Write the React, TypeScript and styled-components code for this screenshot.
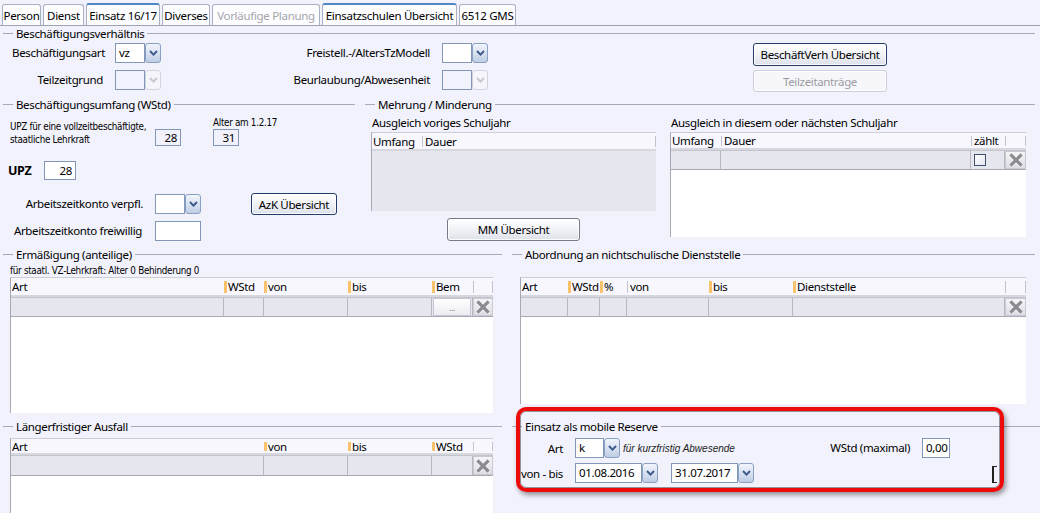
import React from "react";
import styled, { createGlobalStyle } from "styled-components";

const BG = "#f2f2fc";
const LINE = "#a6a9b9";
const FIELD_BORDER = "#8397b9";

const GlobalStyle = createGlobalStyle`
  * { box-sizing: border-box; }
  html, body { margin: 0; padding: 0; background: ${BG}; }
  body {
    font-family: "Noto Sans", "Open Sans", Arial, sans-serif;
    font-size: 11.5px;
    letter-spacing: -0.35px;
    color: #000;
  }
`;

const Page = styled.div`
  width: 1040px;
  height: 513px;
  overflow: hidden;
  display: flex;
  flex-direction: column;
  background: ${BG};
`;

/* ---------- tabs ---------- */
const TabBar = styled.div`
  flex: none;
  height: 26px;
  display: flex;
  align-items: flex-end;
  gap: 2px;
  padding-left: 2px;
  border-bottom: 1px solid #9da3b5;
`;

const Tab = styled.div<{ $w: number; $active?: boolean; $disabled?: boolean }>`
  width: ${(p) => p.$w}px;
  height: ${(p) => (p.$active ? 22 : 21)}px;
  flex: none;
  display: flex;
  align-items: center;
  justify-content: center;
  background: #fdfdff;
  border: 1px solid #a9b0c2;
  border-top: ${(p) => (p.$active ? "2px solid #4f86c6" : "1px solid #a9b0c2")};
  border-bottom: none;
  border-radius: 3px 3px 0 0;
  color: ${(p) => (p.$disabled ? "#a5a5ab" : "#000")};
  font-size: 11.5px;
  letter-spacing: -0.3px;
  white-space: nowrap;
`;

/* ---------- groups ---------- */
const Band = styled.div<{ $h?: number; $pt?: number }>`
  flex: ${(p) => (p.$h ? "none" : "1")};
  height: ${(p) => (p.$h ? `${p.$h}px` : "auto")};
  padding-top: ${(p) => p.$pt ?? 0}px;
  display: flex;
  align-items: flex-start;
`;

const Group = styled.div<{ $w: number; $ml?: number }>`
  position: relative;
  width: ${(p) => p.$w}px;
  margin-left: ${(p) => p.$ml ?? 0}px;
  flex: none;
  display: flex;
  flex-direction: column;
`;

const GroupHead = styled.div`
  flex: none;
  height: 14px;
  display: flex;
  align-items: center;
  gap: 3px;
  padding-left: 3px;
  white-space: nowrap;
  &::before {
    content: "";
    width: 10px;
    height: 1px;
    background: ${LINE};
  }
  &::after {
    content: "";
    flex: 1;
    height: 1px;
    background: ${LINE};
  }
`;

/* ---------- form bits ---------- */
const FieldLabel = styled.div<{ $pr?: number; $w?: number }>`
  justify-self: end;
  align-self: start;
  width: ${(p) => (p.$w ? `${p.$w}px` : "auto")};
  flex: none;
  text-align: right;
  padding-right: ${(p) => p.$pr ?? 10}px;
  height: 20px;
  line-height: 20px;
  white-space: nowrap;
`;

const ComboWrap = styled.div<{ $ml?: number }>`
  display: flex;
  height: 20px;
  align-self: start;
  margin-left: ${(p) => p.$ml ?? 0}px;
  flex: none;
`;

const ComboInput = styled.div<{ $w: number; $white?: boolean }>`
  width: ${(p) => p.$w}px;
  height: 20px;
  border: 1px solid ${FIELD_BORDER};
  background: ${(p) => (p.$white ? "#fff" : BG)};
  padding-left: 3px;
  line-height: 18px;
  white-space: nowrap;
  overflow: hidden;
`;

const ComboButton = styled.div<{ $disabled?: boolean }>`
  width: 16px;
  height: 20px;
  border: 1px solid ${(p) => (p.$disabled ? "#cfd3de" : "#8aa0c3")};
  border-radius: 3px;
  background: ${(p) =>
    p.$disabled ? "#f6f6fa" : "linear-gradient(#f1f5fc, #d6e0f0 55%, #bfcde4)"};
  display: flex;
  align-items: center;
  justify-content: center;
`;

const Chevron = ({ disabled }: { disabled?: boolean }) => (
  <svg width="9" height="6" viewBox="0 0 9 6">
    <path
      d="M1 1 L4.5 4.6 L8 1"
      fill="none"
      stroke={disabled ? "#c4c8d2" : "#3e5b8c"}
      strokeWidth="2"
    />
  </svg>
);

type ComboProps = { value?: string; inputW?: number; white?: boolean; disabled?: boolean; ml?: number };
const Combo = ({ value, inputW = 30, white, disabled, ml }: ComboProps) => (
  <ComboWrap $ml={ml}>
    <ComboInput $w={inputW} $white={white}>{value}</ComboInput>
    <ComboButton $disabled={disabled}>
      <Chevron disabled={disabled} />
    </ComboButton>
  </ComboWrap>
);

const ValueBox = styled.div<{ $w: number; $h: number; $white?: boolean; $left?: boolean }>`
  width: ${(p) => p.$w}px;
  height: ${(p) => p.$h}px;
  flex: none;
  border: 1px solid ${FIELD_BORDER};
  background: ${(p) => (p.$white ? "#fff" : BG)};
  text-align: ${(p) => (p.$left ? "left" : "right")};
  padding: 0 3px;
  line-height: ${(p) => p.$h - 2}px;
`;

const PushButton = styled.button<{ $w: number; $h?: number; $tone?: "dark" | "grey" | "disabled"; $ml?: number; $mt?: number }>`
  width: ${(p) => p.$w}px;
  height: ${(p) => p.$h ?? 23}px;
  margin: ${(p) => p.$mt ?? 0}px 0 0 ${(p) => p.$ml ?? 0}px;
  padding: 0;
  font: inherit;
  letter-spacing: inherit;
  display: flex;
  align-items: center;
  justify-content: center;
  border: 1px solid
    ${(p) => (p.$tone === "disabled" ? "#cbd0da" : p.$tone === "grey" ? "#767b88" : "#233c6a")};
  border-radius: 3px;
  background: ${(p) =>
    p.$tone === "disabled" ? "#f7f7fb" : "linear-gradient(#ffffff, #f3f4f8 45%, #dde1e9)"};
  box-shadow: inset 0 0 0 1px rgba(255, 255, 255, 0.85);
  color: ${(p) => (p.$tone === "disabled" ? "#9c9ca4" : "#000")};
  white-space: nowrap;
  flex: none;
`;

const SmallNote = styled.div<{ $w?: number }>`
  width: ${(p) => (p.$w ? `${p.$w}px` : "auto")};
  font-family: "Liberation Sans Narrow", "DejaVu Sans Condensed", "Liberation Sans", sans-serif;
  font-size: 9.8px;
  letter-spacing: -0.3px;
  line-height: 13px;
  white-space: nowrap;
`;

/* ---------- section 1 ---------- */
const FormGrid1 = styled.div`
  display: grid;
  grid-template-columns: 115px 47px 280px 47px 264px 134px;
  grid-auto-rows: 23px;
  row-gap: 4px;
  margin-top: 3px;
`;

/* ---------- section 2 left ---------- */
const UpzInfoRow = styled.div`
  display: flex;
  align-items: flex-end;
  height: 29px;
  margin-top: 6px;
  padding-left: 10px;
`;

const AgeCol = styled.div`
  display: flex;
  flex-direction: column;
  margin-left: 32px;
  ${SmallNote} {
    line-height: 12px;
  }
`;

const UpzRow = styled.div`
  display: flex;
  align-items: center;
  margin-top: 15px;
  padding-left: 8px;
`;

const StrongLabel = styled.div`
  width: 36px;
  font-weight: 700;
  font-size: 12.5px;
`;

const KontoGrid = styled.div`
  display: grid;
  grid-template-columns: 155px 96px 86px;
  grid-template-rows: 22px 20px;
  row-gap: 6px;
  margin-top: 13px;
  align-items: center;
  ${FieldLabel}, ${ComboWrap} {
    align-self: center;
  }
`;

/* ---------- section 2 right ---------- */
const MehrungBody = styled.div`
  display: flex;
  gap: 14px;
  padding-left: 9px;
`;

const MCol = styled.div`
  display: flex;
  flex-direction: column;
`;

const Caption = styled.div`
  margin-top: 5px;
  height: 14px;
  line-height: 14px;
  padding-left: 1px;
  white-space: nowrap;
`;

/* ---------- data tables ---------- */
type Mark = "none" | "orange" | "grey";
type Col = { label: string; w: number; mark?: Mark; end?: boolean; cell?: "plain" | "dots" | "del" | "check" };

const TableBox = styled.div<{ $w: number; $h: number; $body?: string; $mt?: number; $ml?: number }>`
  width: ${(p) => p.$w}px;
  height: ${(p) => p.$h}px;
  margin: ${(p) => p.$mt ?? 0}px 0 0 ${(p) => p.$ml ?? 0}px;
  flex: none;
  display: flex;
  flex-direction: column;
  background: ${(p) => p.$body ?? "#fff"};
  border-left: 1px solid #a9a9b4;
  border-top: 1px solid #cdcdd6;
`;

const HeadRow = styled.div<{ $h: number }>`
  flex: none;
  height: ${(p) => p.$h}px;
  display: flex;
  background: #f7f7fd;
  border-bottom: 2px solid #d7d7df;
`;

const sep = (color: string, w: number, side: string) =>
  `linear-gradient(${color}, ${color}) ${side} 3px / ${w}px calc(100% - 5px) no-repeat`;

const HeadCell = styled.div<{ $w: number; $mark: Mark; $end?: boolean }>`
  width: ${(p) => p.$w}px;
  flex: none;
  display: flex;
  align-items: center;
  padding-left: ${(p) => (p.$mark === "orange" ? 4 : p.$mark === "grey" ? 3 : 1)}px;
  white-space: nowrap;
  overflow: hidden;
  background: ${(p) =>
    [
      p.$mark === "orange" ? sep("#fbc46c", 3, "0") : "",
      p.$mark === "grey" ? sep("#c3c3cc", 1, "0") : "",
      p.$end ? sep("#c3c3cc", 1, "100%") : "",
      "transparent",
    ]
      .filter(Boolean)
      .join(", ")};
`;

const DataRow = styled.div<{ $h: number }>`
  flex: none;
  height: ${(p) => p.$h}px;
  display: flex;
  background: #e6e6ef;
  border-top: 1px solid #c4c4cd;
  border-bottom: 1px solid #a9a9b3;
`;

const DataCell = styled.div<{ $w: number; $last?: boolean; $start?: boolean }>`
  width: ${(p) => p.$w}px;
  flex: none;
  display: flex;
  align-items: center;
  justify-content: ${(p) => (p.$start ? "flex-start" : "center")};
  padding-left: ${(p) => (p.$start ? 3 : 0)}px;
  border-right: ${(p) => (p.$last ? "none" : "1px solid #b8b8c1")};
`;

const DelBox = styled.div`
  width: 100%;
  height: 100%;
  display: flex;
  align-items: center;
  justify-content: center;
  border: 1px solid #c9c9d1;
  background: linear-gradient(#f5f5f8, #dcdce3);
`;

const DotsBox = styled.div`
  width: 100%;
  height: 100%;
  margin: 0 1px;
  display: flex;
  align-items: flex-end;
  justify-content: center;
  padding-bottom: 3px;
  border: 1px solid #c7c7cf;
  background: linear-gradient(#ffffff, #ececf2);
  color: #7d7d85;
  font-size: 9px;
  line-height: 9px;
`;

const CheckBox = styled.div`
  width: 12px;
  height: 12px;
  border: 1px solid #3f4d6c;
  background: linear-gradient(135deg, #ffffff, #e2e6ee);
`;

const DelIcon = () => (
  <svg width="14" height="14" viewBox="0 0 14 14">
    <path d="M2.5 2.5 L11.5 11.5 M11.5 2.5 L2.5 11.5" stroke="#ffffff" strokeWidth="4.6" strokeLinecap="square" opacity="0.7" />
    <path d="M2.5 2.5 L11.5 11.5 M11.5 2.5 L2.5 11.5" stroke="#8b8b91" strokeWidth="3.2" strokeLinecap="square" />
  </svg>
);

type TableProps = {
  cols: Col[];
  w: number;
  h: number;
  headH: number;
  rowH?: number;
  body?: string;
  mt?: number;
  ml?: number;
};

const DataTable = ({ cols, w, h, headH, rowH, body, mt, ml }: TableProps) => (
  <TableBox $w={w} $h={h} $body={body} $mt={mt} $ml={ml}>
    <HeadRow $h={headH}>
      {cols.map((c, i) => (
        <HeadCell key={i} $w={c.w} $mark={c.mark ?? "none"} $end={c.end}>
          {c.label}
        </HeadCell>
      ))}
    </HeadRow>
    {rowH ? (
      <DataRow $h={rowH}>
        {cols.map((c, i) => (
          <DataCell key={i} $w={c.w} $last={c.cell === "del"} $start={c.cell === "check"}>
            {c.cell === "del" && (
              <DelBox>
                <DelIcon />
              </DelBox>
            )}
            {c.cell === "dots" && <DotsBox>...</DotsBox>}
            {c.cell === "check" && <CheckBox />}
          </DataCell>
        ))}
      </DataRow>
    ) : null}
  </TableBox>
);

/* ---------- section 3/4 ---------- */
const NoteLine = styled(SmallNote)`
  margin-top: 4px;
  padding-left: 10px;
  height: 12px;
  line-height: 12px;
`;

const ReserveRow = styled.div<{ $mt: number }>`
  display: flex;
  align-items: center;
  height: 20px;
  margin-top: ${(p) => p.$mt}px;
`;

const RowLabel = styled.div`
  width: 66px;
  flex: none;
  text-align: right;
  padding-right: 12px;
  white-space: nowrap;
`;

const ItalicNote = styled.div`
  width: 119px;
  flex: none;
  padding-left: 3px;
  font-family: "Liberation Sans", Arial, sans-serif;
  font-style: italic;
  font-size: 10px;
  letter-spacing: 0;
  color: #222;
  white-space: nowrap;
`;

const CutBracket = styled.div`
  margin-left: auto;
  margin-right: 43px;
  width: 5px;
  height: 17px;
  border: 2px solid #222;
  border-right: none;
  border-top-width: 1px;
  border-bottom-width: 1px;
  align-self: flex-end;
`;

const Highlight = styled.div`
  position: absolute;
  left: 7px;
  top: -12px;
  width: 488px;
  height: 85px;
  border: 4px solid #ec0a0a;
  border-radius: 10px;
  box-shadow: 2px 3px 5px rgba(0, 0, 0, 0.4), inset 0 0 0 1px rgba(70, 70, 70, 0.55);
  pointer-events: none;
`;

/* ---------- data ---------- */
const TABS = [
  { label: "Person", w: 39 },
  { label: "Dienst", w: 41 },
  { label: "Einsatz 16/17", w: 74, active: true },
  { label: "Diverses", w: 48 },
  { label: "Vorläufige Planung", w: 108, disabled: true },
  { label: "Einsatzschulen Übersicht", w: 135, active: true },
  { label: "6512 GMS", w: 57 },
];

const ERM_COLS: Col[] = [
  { label: "Art", w: 213 },
  { label: "WStd", w: 40, mark: "orange" },
  { label: "von", w: 84, mark: "orange" },
  { label: "bis", w: 84, mark: "orange" },
  { label: "Bem", w: 41, mark: "orange", cell: "dots" },
  { label: "", w: 20, mark: "grey", end: true, cell: "del" },
];

const ABO_COLS: Col[] = [
  { label: "Art", w: 47 },
  { label: "WStd", w: 32, mark: "orange" },
  { label: "%", w: 27, mark: "orange" },
  { label: "von", w: 82, mark: "grey" },
  { label: "bis", w: 84, mark: "orange" },
  { label: "Dienststelle", w: 212, mark: "orange" },
  { label: "", w: 21, mark: "grey", end: true, cell: "del" },
];

const AUS_COLS: Col[] = [
  { label: "Art", w: 253 },
  { label: "von", w: 84, mark: "orange" },
  { label: "bis", w: 84, mark: "orange" },
  { label: "WStd", w: 41, mark: "orange" },
  { label: "", w: 20, mark: "grey", end: true, cell: "del" },
];

const MM_LEFT_COLS: Col[] = [
  { label: "Umfang", w: 50 },
  { label: "Dauer", w: 234, mark: "grey", end: true },
];

const MM_RIGHT_COLS: Col[] = [
  { label: "Umfang", w: 50 },
  { label: "Dauer", w: 250, mark: "grey" },
  { label: "zählt", w: 34, mark: "grey", cell: "check" },
  { label: "", w: 21, mark: "grey", end: true, cell: "del" },
];

export default function App() {
  return (
    <>
      <GlobalStyle />
      <Page>
        <TabBar>
          {TABS.map((t) => (
            <Tab key={t.label} $w={t.w} $active={t.active} $disabled={t.disabled}>
              {t.label}
            </Tab>
          ))}
        </TabBar>

        <Band $h={71}>
          <Group $w={1035}>
            <GroupHead>Beschäftigungsverhältnis</GroupHead>
            <FormGrid1>
              <FieldLabel>Beschäftigungsart</FieldLabel>
              <Combo value="vz" white />
              <FieldLabel $pr={12}>Freistell.-/AltersTzModell</FieldLabel>
              <Combo white />
              <span />
              <PushButton $w={134} $tone="dark">BeschäftVerh Übersicht</PushButton>
              <FieldLabel $pr={12}>Teilzeitgrund</FieldLabel>
              <Combo disabled />
              <FieldLabel $pr={12}>Beurlaubung/Abwesenheit</FieldLabel>
              <Combo disabled />
              <span />
              <PushButton $w={134} $h={22} $tone="disabled">Teilzeitanträge</PushButton>
            </FormGrid1>
          </Group>
        </Band>

        <Band $h={149}>
          <Group $w={355}>
            <GroupHead>Beschäftigungsumfang (WStd)</GroupHead>
            <UpzInfoRow>
              <SmallNote $w={145}>
                UPZ für eine vollzeitbeschäftigte,
                <br />
                staatliche Lehrkraft
              </SmallNote>
              <ValueBox $w={26} $h={17}>28</ValueBox>
              <AgeCol>
                <SmallNote>Alter am 1.2.17</SmallNote>
                <ValueBox $w={26} $h={17}>31</ValueBox>
              </AgeCol>
            </UpzInfoRow>
            <UpzRow>
              <StrongLabel>UPZ</StrongLabel>
              <ValueBox $w={32} $h={19} $white>28</ValueBox>
            </UpzRow>
            <KontoGrid>
              <FieldLabel $pr={12}>Arbeitszeitkonto verpfl.</FieldLabel>
              <Combo white />
              <PushButton $w={86} $h={22} $tone="dark">AzK Übersicht</PushButton>
              <FieldLabel $pr={13}>Arbeitszeitkonto freiwillig</FieldLabel>
              <ValueBox $w={46} $h={20} $white />
              <span />
            </KontoGrid>
          </Group>

          <Group $w={673} $ml={7}>
            <GroupHead>Mehrung / Minderung</GroupHead>
            <MehrungBody>
              <MCol>
                <Caption>Ausgleich voriges Schuljahr</Caption>
                <DataTable cols={MM_LEFT_COLS} w={285} h={79} headH={18} body="#e6e6ef" mt={2} />
                <PushButton $w={133} $tone="grey" $ml={76} $mt={7}>MM Übersicht</PushButton>
              </MCol>
              <MCol>
                <Caption>Ausgleich in diesem oder nächsten Schuljahr</Caption>
                <DataTable cols={MM_RIGHT_COLS} w={356} h={105} headH={17} rowH={20} mt={2} />
              </MCol>
            </MehrungBody>
          </Group>
        </Band>

        <Band $h={170} $pt={1}>
          <Group $w={502}>
            <GroupHead>Ermäßigung (anteilige)</GroupHead>
            <NoteLine>für staatl. VZ-Lehrkraft: Alter 0 Behinderung 0</NoteLine>
            <DataTable cols={ERM_COLS} w={483} h={136} headH={19} rowH={20} ml={10} />
          </Group>
          <Group $w={526} $ml={7}>
            <GroupHead>Abordnung an nichtschulische Dienststelle</GroupHead>
            <DataTable cols={ABO_COLS} w={506} h={127} headH={19} rowH={20} mt={16} ml={11} />
          </Group>
        </Band>

        <Band $pt={3}>
          <Group $w={502}>
            <GroupHead>Längerfristiger Ausfall</GroupHead>
            <DataTable cols={AUS_COLS} w={483} h={100} headH={16} rowH={21} mt={5} ml={10} />
          </Group>
          <Group $w={531} $ml={7}>
            <GroupHead>Einsatz als mobile Reserve</GroupHead>
            <ReserveRow $mt={5}>
              <RowLabel>Art</RowLabel>
              <Combo value="k" inputW={29} white />
              <ItalicNote>für kurzfristig Abwesende</ItalicNote>
              <FieldLabel $w={183} $pr={12}>WStd (maximal)</FieldLabel>
              <ValueBox $w={28} $h={20} $white $left>0,00</ValueBox>
            </ReserveRow>
            <ReserveRow $mt={5}>
              <RowLabel>von - bis</RowLabel>
              <Combo value="01.08.2016" inputW={67} white />
              <Combo value="31.07.2017" inputW={67} white ml={13} />
              <CutBracket />
            </ReserveRow>
            <Highlight />
          </Group>
        </Band>
      </Page>
    </>
  );
}
